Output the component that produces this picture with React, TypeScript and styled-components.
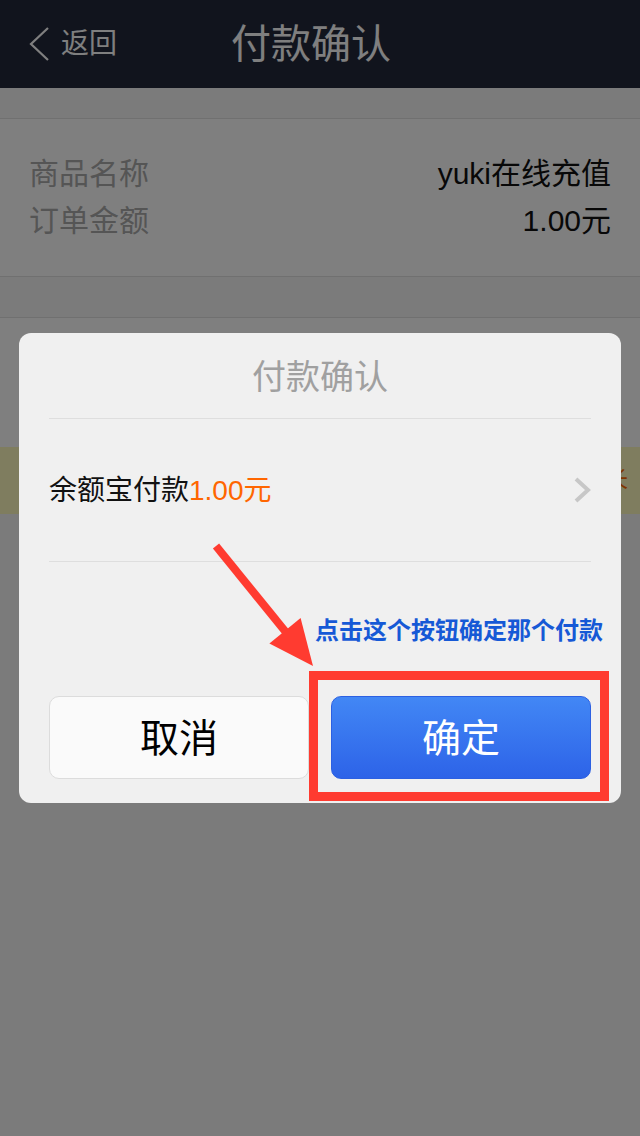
import React from "react";
import styled, { createGlobalStyle } from "styled-components";

const GlobalStyle = createGlobalStyle`
  html, body { margin: 0; padding: 0; }
  body {
    width: 640px;
    height: 1136px;
    overflow: hidden;
    background: #f6f6f6;
    font-family: "Liberation Sans", "Noto Sans CJK SC", sans-serif;
  }
`;

const Page = styled.div`
  min-height: 1136px;
  background: #f6f6f6;
  display: flex;
  flex-direction: column;
`;

const Header = styled.header`
  height: 88px;
  background: #22283a;
  display: grid;
  grid-template-columns: 1fr auto 1fr;
  align-items: center;
  padding: 0 29px;
  box-sizing: border-box;
`;

const BackButton = styled.div`
  display: flex;
  align-items: center;
  gap: 12px;
  color: #ffffff;
  font-size: 28px;
  line-height: 34px;
`;

const HeaderTitle = styled.h1`
  margin: 0 18px 0 0;
  font-size: 40px;
  font-weight: normal;
  color: #ffffff;
  line-height: 48px;
`;

const Card = styled.section<{ $gap: number }>`
  margin-top: ${(p) => p.$gap}px;
  background: #ffffff;
  border-top: 1px solid #e0e0e0;
  border-bottom: 1px solid #e0e0e0;
  padding: 31px 29px 32px;
  display: flex;
  flex-direction: column;
`;

const InfoRow = styled.div`
  height: 47px;
  box-sizing: border-box;
  padding-bottom: 6px;
  display: flex;
  align-items: center;
  justify-content: space-between;
  font-size: 30px;
`;

const InfoLabel = styled.span`
  color: #aaaaaa;
`;

const InfoValue = styled.span`
  color: #111111;
`;

const BlankCard = styled.section`
  margin-top: 40px;
  height: 129px;
  background: #ffffff;
  border-top: 1px solid #e0e0e0;
`;

const Notice = styled.div`
  height: 67px;
  box-sizing: border-box;
  background: #fefabe;
  display: flex;
  align-items: center;
  justify-content: flex-end;
  padding: 0 12px 8px 0;
  white-space: nowrap;
  font-size: 22px;
  color: #ff6a00;
`;

const Overlay = styled.div`
  position: fixed;
  inset: 0;
  background: rgba(0, 0, 0, 0.5);
  display: flex;
  align-items: center;
  justify-content: center;
`;

const Modal = styled.div`
  position: relative;
  width: 602px;
  box-sizing: border-box;
  background: #f0f0f0;
  border-radius: 12px;
  padding: 0 30px;
  display: flex;
  flex-direction: column;
`;

const ModalTitle = styled.div`
  height: 86px;
  box-sizing: border-box;
  padding-bottom: 2px;
  display: flex;
  align-items: center;
  justify-content: center;
  font-size: 34px;
  color: #a0a0a0;
  border-bottom: 1px solid #dedede;
`;

const PayRow = styled.div`
  height: 142px;
  display: flex;
  align-items: center;
  justify-content: space-between;
  font-size: 28px;
  color: #111111;
  border-bottom: 1px solid #dedede;
`;

const PayText = styled.span`
  margin-top: -5px;
`;

const Amount = styled.span`
  color: #ff6600;
`;

const Hint = styled.div`
  margin: 54px -12px 50px 0;
  text-align: right;
  font-size: 24px;
  line-height: 30px;
  font-weight: bold;
  color: #1659d6;
`;

const ButtonRow = styled.div`
  display: grid;
  grid-template-columns: 1fr 1fr;
  gap: 22px;
  height: 83px;
  margin-bottom: 24px;
`;

const ActionButton = styled.button<{ $primary?: boolean }>`
  box-sizing: border-box;
  height: 83px;
  border-radius: 10px;
  font-family: inherit;
  font-size: 39px;
  border: 1px solid ${(p) => (p.$primary ? "#2c60e2" : "#dcdcdc")};
  background: ${(p) =>
    p.$primary ? "linear-gradient(#4287f5, #2d63e8)" : "#fafafa"};
  color: ${(p) => (p.$primary ? "#ffffff" : "#000000")};
  display: flex;
  align-items: center;
  justify-content: center;
  padding: 0 0 6px;
`;

const Annotation = styled.svg`
  position: absolute;
  left: 0;
  top: 0;
  width: 602px;
  height: 471px;
  overflow: visible;
  pointer-events: none;
`;

export default function App() {
  return (
    <>
      <GlobalStyle />
      <Page>
        <Header>
          <BackButton>
            <svg width="20" height="34" viewBox="0 0 20 34">
              <polyline points="19,1 2,17 19,33" fill="none" stroke="#ffffff" strokeWidth="2.2" />
            </svg>
            返回
          </BackButton>
          <HeaderTitle>付款确认</HeaderTitle>
          <span />
        </Header>
        <Card $gap={30}>
          <InfoRow>
            <InfoLabel>商品名称</InfoLabel>
            <InfoValue>yuki在线充值</InfoValue>
          </InfoRow>
          <InfoRow>
            <InfoLabel>订单金额</InfoLabel>
            <InfoValue>1.00元</InfoValue>
          </InfoRow>
        </Card>
        <BlankCard />
        <Notice>收益持续增长</Notice>
      </Page>
      <Overlay>
        <Modal>
          <ModalTitle>付款确认</ModalTitle>
          <PayRow>
            <PayText>
              余额宝付款<Amount>1.00元</Amount>
            </PayText>
            <svg width="17" height="26" viewBox="0 0 17 26">
              <polyline points="2,2 14,13 2,24" fill="none" stroke="#c7c7c7" strokeWidth="4" />
            </svg>
          </PayRow>
          <Hint>点击这个按钮确定那个付款</Hint>
          <ButtonRow>
            <ActionButton>取消</ActionButton>
            <ActionButton $primary>确定</ActionButton>
          </ButtonRow>
          <Annotation viewBox="0 0 602 471">
            <line x1="197" y1="213" x2="270" y2="303" stroke="#ff3b30" strokeWidth="8" />
            <polygon points="294,333 281.6,285 250.4,310.6" fill="#ff3b30" />
            <rect x="294.5" y="342.5" width="291" height="121" fill="none" stroke="#ff3b30" strokeWidth="9" />
          </Annotation>
        </Modal>
      </Overlay>
    </>
  );
}
